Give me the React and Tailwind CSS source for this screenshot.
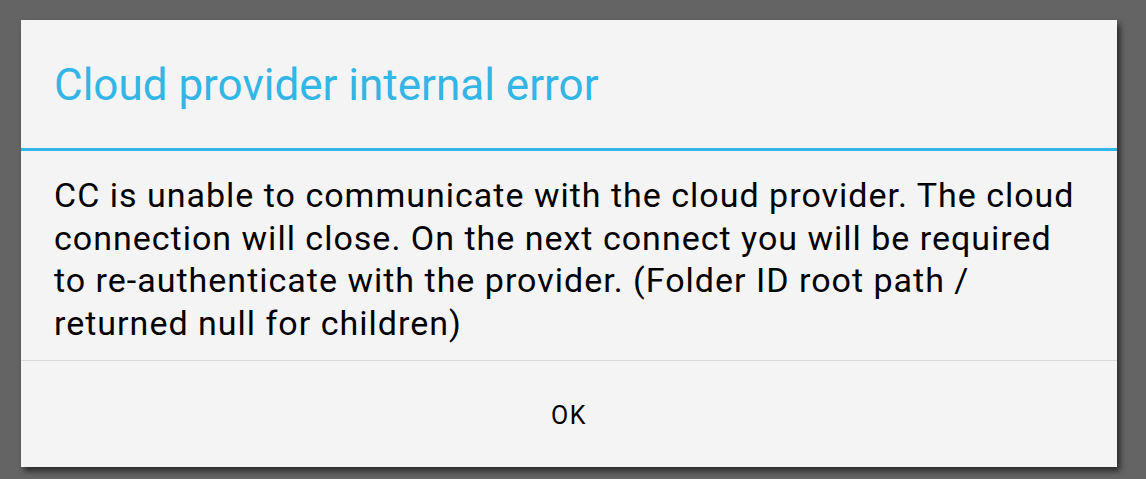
export default function App() {
    return (
        <div className="w-full h-[479px] bg-[#646464] pt-[20px] pl-[21px] overflow-hidden" style={{ fontFamily: 'Roboto, "Noto Sans", sans-serif' }}>
            <div className="w-[1096px] bg-[#f4f4f4] shadow-[3px_4px_6px_rgba(0,0,0,0.6)]">
                {/* Title */}
                <div className="h-[128px] flex items-center pt-[2px] px-[33px]">
                    <h1 className="text-[44px] text-[#33b5e5] leading-normal">Cloud provider internal error</h1>
                </div>
                <div className="h-[3px] bg-[#33b5e5]" />

                {/* Message */}
                <div className="pt-[23px] pb-[16px] px-[33px]">
                    <p className="text-[34px] leading-[42.5px] tracking-[1px] text-black">
                        CC is unable to communicate with the cloud provider. The cloud connection will close. On the next connect you will be required to re-authenticate with the provider. (Folder ID root path / returned null for children)
                    </p>
                </div>

                {/* Button */}
                <div className="border-t border-[#d9d9d9]">
                    <button className="w-full h-[106px] flex items-center justify-center pt-[3px] text-[25px] tracking-[1.5px] text-black">
                        OK
                    </button>
                </div>
            </div>
        </div>
    );
}
